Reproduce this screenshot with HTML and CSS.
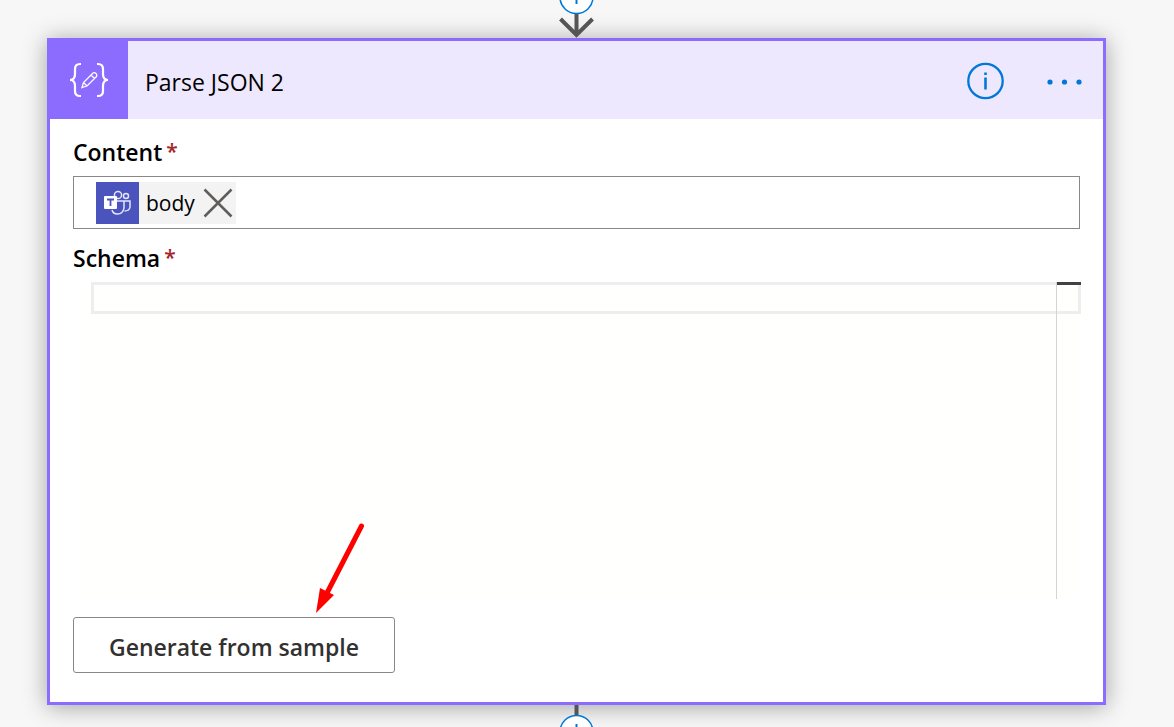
FILE: index.html
```html
<!DOCTYPE html>
<html lang="en">
<head>
    <meta charset="UTF-8">
    <meta name="viewport" content="width=device-width, initial-scale=1.0">
    <title>Parse JSON 2</title>
    <link rel="stylesheet" href="styles.css">
</head>
<body>
    <main class="flow">
        <svg class="connector" width="41" height="38" viewBox="0 0 41 38">
            <path d="M20.500 13V36M4.500 19L20.500 35L36.500 19" fill="none" stroke="#555" stroke-width="4"/>
            <circle cx="20.500" cy="-3" r="16.500" fill="#fff" stroke="#0078d7" stroke-width="1.500"/>
            <path d="M20.500 -11V4" stroke="#0078d7" stroke-width="2"/>
        </svg>

        <section class="card">
            <header class="card-header">
                <div class="card-icon">
                    <svg width="40" height="36" viewBox="0 0 40 36" fill="none" stroke="#fff">
                        <path d="M12 2H11Q6 2 6 7V12Q6 18 1 18Q6 18 6 24V29Q6 34 11 34H12" stroke-width="2.200"/>
                        <path d="M28 2H29Q34 2 34 7V12Q34 18 39 18Q34 18 34 24V29Q34 34 29 34H28" stroke-width="2.200"/>
                        <path d="M13 25.500L14.500 20.500L24 11Q25.500 10 27 11.500Q28.500 13 27.500 14.500L18 24ZM22 13L25.500 16.500M14.500 20.500L18 24" stroke-width="1.300"/>
                    </svg>
                </div>
                <h1 class="card-title">Parse JSON 2</h1>
                <button class="icon-button" type="button" aria-label="Information">
                    <svg width="38" height="38" viewBox="0 0 38 38">
                        <circle cx="18.500" cy="19" r="17.200" fill="none" stroke="#0078d7" stroke-width="2.300"/>
                        <path d="M18.500 15.500V27.500M18.500 10.500V13" stroke="#0078d7" stroke-width="2.600"/>
                    </svg>
                </button>
                <button class="icon-button" type="button" aria-label="More commands">
                    <svg width="36" height="38" viewBox="0 0 36 38" fill="#0078d7">
                        <circle cx="3" cy="20" r="2.600"/>
                        <circle cx="17.500" cy="20" r="2.600"/>
                        <circle cx="32" cy="20" r="2.600"/>
                    </svg>
                </button>
            </header>

            <div class="card-body">
                <label class="label" for="content">Content<span class="required">*</span></label>
                <div class="token-field">
                    <div class="token">
                        <div class="token-icon">
                            <svg width="29" height="26" viewBox="0 0 29 26">
                                <g fill="none" stroke="#e4e7fa" stroke-width="1.500">
                                    <circle cx="15" cy="5" r="3.600"/>
                                    <circle cx="23" cy="6" r="2.500"/>
                                    <path d="M14 11H21V18Q20 24 14.500 24Q10 24 9 20M21 11H27V17Q26.500 21 21.500 21"/>
                                </g>
                                <rect x="1" y="6" width="13" height="13" rx="1" fill="#fff"/>
                                <path d="M4 9.500H11M7.500 9.500V16" fill="none" stroke="#4b53bc" stroke-width="1.800"/>
                            </svg>
                        </div>
                        <span class="token-text">body</span>
                        <button class="token-remove" type="button" aria-label="Remove body">
                            <svg width="30" height="30" viewBox="0 0 30 30">
                                <path d="M1.500 1.500L28.500 28.500M28.500 1.500L1.500 28.500" stroke="#605e5c" stroke-width="2.500"/>
                            </svg>
                        </button>
                    </div>
                    <input class="token-input" id="content" type="text">
                </div>

                <label class="label" for="schema">Schema<span class="required">*</span></label>
                <div class="editor">
                    <div class="current-line"></div>
                    <textarea class="editor-text" id="schema" spellcheck="false"></textarea>
                    <div class="ruler"></div>
                </div>

                <div class="actions">
                    <button class="generate" type="button">Generate from sample</button>
                    <svg class="pointer" width="52" height="92" viewBox="0 0 52 92">
                        <path d="M47.500 5L13 72" stroke="#f00" stroke-width="5" stroke-linecap="round"/>
                        <path d="M2 92L6 67L20 74Z" fill="#f00"/>
                    </svg>
                </div>
            </div>
        </section>

        <svg class="connector" width="41" height="22" viewBox="0 0 41 22">
            <path d="M20.500 0V11" stroke="#555" stroke-width="4"/>
            <circle cx="20.500" cy="27" r="16.500" fill="#fff" stroke="#0078d7" stroke-width="1.500"/>
            <path d="M20.500 19V34" stroke="#0078d7" stroke-width="2"/>
        </svg>
    </main>
</body>
</html>
```

FILE: styles.css
```css
* {
    box-sizing: border-box;
}
body {
    margin: 0;
    background-color: #f7f7f7;
    color: #000;
    font-family: "Open Sans", "Noto Sans", sans-serif;
}
.flow {
    display: flex;
    flex-direction: column;
    align-items: center;
    padding: 0 68px 0 47px;
}
.connector {
    display: block;
    position: relative;
    z-index: 1;
}
.card {
    width: 100%;
    background-color: #fff;
    border: 3px solid #8c6cff;
    box-shadow: 0 2px 22px rgba(0, 0, 0, 0.35);
}
.card-header {
    display: flex;
    align-items: center;
    gap: 42px;
    height: 78px;
    padding-right: 20px;
    background-color: #eee8ff;
}
.card-icon {
    display: flex;
    align-items: center;
    justify-content: center;
    width: 78px;
    height: 78px;
    background-color: #8c6cff;
}
.card-title {
    flex: 1;
    margin: 0 0 0 -25px;
    padding-top: 3px;
    font-size: 23px;
    font-weight: 400;
    line-height: 34px;
}
.icon-button {
    display: flex;
    padding: 2px 0 0;
    border: none;
    background: none;
    cursor: pointer;
}
.card-body {
    padding: 16px 23px 29px;
}
.label {
    display: block;
    margin-bottom: 7px;
    font-size: 23px;
    font-weight: 600;
    line-height: 34px;
}
.required {
    margin-left: 4px;
    color: #a4262c;
    font-size: 21px;
    line-height: 21px;
    vertical-align: 2px;
}
.token-field {
    display: flex;
    align-items: center;
    height: 53px;
    margin-bottom: 12px;
    padding-left: 22px;
    border: 1px solid #8a8886;
}
.token {
    display: flex;
    align-items: center;
    height: 42px;
    background-color: #f3f3f3;
}
.token-icon {
    display: flex;
    align-items: center;
    justify-content: center;
    width: 43px;
    height: 42px;
    background-color: #4b53bc;
}
.token-text {
    margin: 0 8px 0 7px;
    font-size: 21px;
    line-height: 34px;
}
.token-remove {
    display: flex;
    padding: 0 3px 0 0;
    border: none;
    background: none;
    cursor: pointer;
}
.token-input {
    flex: 1;
    min-width: 0;
    height: 42px;
    border: none;
    outline: none;
    background: none;
    font: inherit;
    font-size: 21px;
}
.editor {
    display: flex;
    position: relative;
    height: 317px;
    margin: 0 -1px 0 4px;
    background-color: #fffffd;
}
.current-line {
    position: absolute;
    top: 0;
    left: 14px;
    right: 0;
    height: 32px;
    border: 3px solid #eee;
}
.editor-text {
    position: relative;
    flex: 1;
    padding: 3px 20px;
    border: none;
    outline: none;
    resize: none;
    background: none;
    font-family: "Liberation Mono", monospace;
    font-size: 21px;
}
.ruler {
    position: relative;
    width: 25px;
    border-left: 1px solid #d4d4d4;
}
.ruler::before {
    content: "";
    display: block;
    height: 3px;
    background-color: #424242;
}
.actions {
    position: relative;
    margin-top: 18px;
}
.generate {
    display: block;
    width: 322px;
    height: 56px;
    padding: 4px 0 0;
    border: 1px solid #8a8886;
    border-radius: 3px;
    background-color: #fff;
    color: #323130;
    font-family: inherit;
    font-size: 23px;
    font-weight: 600;
    line-height: 34px;
    cursor: pointer;
}
.pointer {
    position: absolute;
    left: 241px;
    bottom: 60px;
    pointer-events: none;
}
```
